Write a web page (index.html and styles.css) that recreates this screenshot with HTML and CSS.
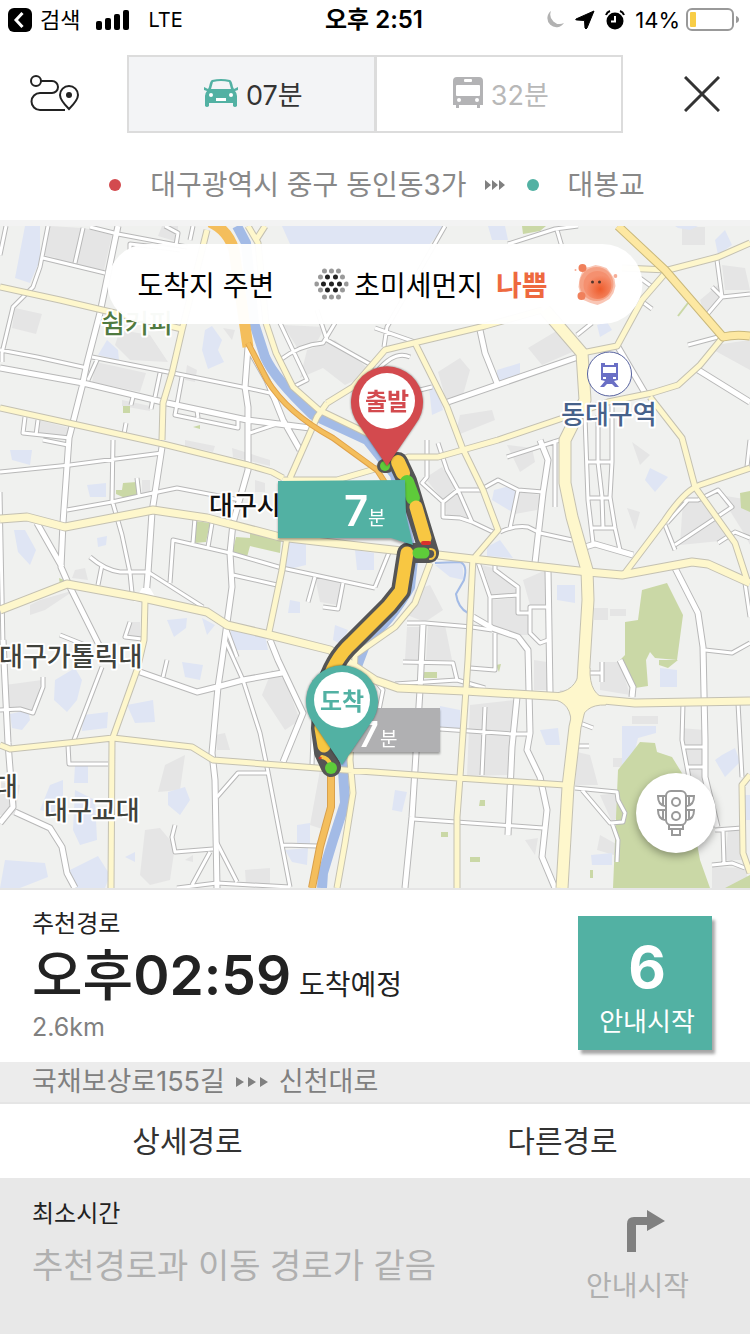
FILE: index.html
```html
<!DOCTYPE html>
<html lang="ko">

<head>
    <meta charset="UTF-8">
    <meta name="viewport" content="width=device-width, initial-scale=1.0">
    <title>길찾기</title>
    <link rel="stylesheet" href="styles.css">
</head>

<body>
    <div class="status-bar">
        <div class="status-left">
            <svg width="24" height="24" viewBox="0 0 24 24">
                <rect width="24" height="24" rx="6" />
                <path d="M14.500 5 L8 12 L14.500 19" fill="none" stroke="#fff" stroke-width="3" />
            </svg>
            <span>검색</span>
            <svg class="signal" width="34" height="20" viewBox="0 0 34 20">
                <rect x="0" y="11" width="6" height="9" rx="2" />
                <rect x="9" y="8" width="6" height="12" rx="2" />
                <rect x="18" y="4" width="6" height="16" rx="2" />
                <rect x="27" y="0" width="6" height="20" rx="2" />
            </svg>
            <span class="carrier">LTE</span>
        </div>
        <div class="status-time">오후 2:51</div>
        <div class="status-right">
            <svg width="20" height="20" viewBox="0 0 20 20">
                <path d="M6 1 A9 9 0 1 0 19 13 A9.500 9.500 0 0 1 6 1z" fill="#b2b2b2" />
            </svg>
            <svg width="20" height="20" viewBox="0 0 20 20">
                <path d="M19 1 L1 9 Q0 10 2 10 L9.500 10.500 L10 18 Q11 20 12 18z" stroke="#000" />
            </svg>
            <svg width="20" height="20" viewBox="0 0 20 20">
                <circle cx="10" cy="11" r="8.500" />
                <path d="M10 6 V11.500 H6" fill="none" stroke="#fff" stroke-width="2" />
                <path d="M1 5 Q2 2 5 1 M15 1 Q18 2 19 5" fill="none" stroke="#000" stroke-width="2" />
            </svg>
            <span>14%</span>
            <svg width="54" height="24" viewBox="0 0 54 24">
                <rect x="1" y="1" width="46" height="21" rx="5" fill="none" stroke="#999" stroke-width="2" />
                <rect x="4" y="4" width="6" height="15" rx="1" fill="#f8cd46" />
                <path d="M50 8 Q53 9 53 11.500 Q53 14 50 15z" fill="#999" />
            </svg>
        </div>
    </div>

    <header class="header">
        <button class="icon-btn" aria-label="경로">
            <svg width="50" height="38" viewBox="0 0 50 38" fill="none" stroke="#222" stroke-width="2">
                <circle cx="6" cy="6" r="5" />
                <path d="M11 6 H22 A6 6 0 0 1 22 18 H10 A8 8 0 0 0 10 35 H35" />
                <path d="M39 34 Q30 25 30 20 A9 9 0 0 1 48 20 Q48 25 39 34z" />
                <circle cx="39" cy="20" r="3" fill="#222" stroke="none" />
            </svg>
        </button>
        <div class="tabs">
            <button class="tab active">
                <svg width="34" height="28" viewBox="0 0 34 28">
                    <path d="M8 1 Q17 -1 26 1 Q28 2 29 8 L30 10 L34 8 V11 L31 12 Q33 14 33 17 V27 Q31 29 29 27 V24 H5 V27 Q3 29 1 27 V17 Q1 14 3 12 L0 11 V8 L4 10 L5 8 Q6 2 8 1z" fill="#52b1a3" />
                    <path d="M9 3 Q17 1 25 3 L27 10 H7z" fill="#f3f4f6" />
                    <circle cx="7" cy="16" r="2" fill="#fff" />
                    <circle cx="27" cy="16" r="2" fill="#fff" />
                    <rect x="12" y="19" width="10" height="3" fill="#fff" />
                </svg>
                07분
            </button>
            <button class="tab">
                <svg width="30" height="32" viewBox="0 0 30 32">
                    <path d="M4 0 H26 Q30 0 30 4 V28 H27 V31 H24 V28 H6 V31 H3 V28 H0 V4 Q0 0 4 0z" fill="#b3b3b5" />
                    <rect x="11" y="2" width="8" height="3" rx="1" fill="#fff" />
                    <rect x="3" y="8" width="24" height="11" rx="1" fill="#fff" />
                    <circle cx="6" cy="23" r="2" fill="#fff" />
                    <circle cx="24" cy="23" r="2" fill="#fff" />
                </svg>
                32분
            </button>
        </div>
        <button class="icon-btn" aria-label="닫기">
            <svg width="36" height="36" viewBox="0 0 36 36">
                <path d="M1 1 L35 35 M35 1 L1 35" stroke="#333" stroke-width="3" />
            </svg>
        </button>
    </header>

    <div class="route-title">
        <i class="dot start"></i>
        <span>대구광역시 중구 동인동3가</span>
        <svg class="arrows" width="20" height="10" viewBox="0 0 20 10">
            <path d="M0 0 L6 5 L0 10z M7 0 L13 5 L7 10z M14 0 L20 5 L14 10z" />
        </svg>
        <i class="dot goal"></i>
        <span>대봉교</span>
    </div>

    <main class="map">
        <svg class="map-canvas" viewBox="0 226 750 662">
            <defs>
                <path id="lanes" d="M118 230 L115 240 M90 227 L118 234 L187 247 M43 258 L105 273 M83 228 L75 263 M48 226 L40 267 L33 287 L13 307 L2 353 V362 M0 350 L37 357 L87 368 M92 357 L173 373 L247 388 L270 393 L277 403 M97 360 L88 380 M160 373 L155 397 M182 377 L175 415 L238 428 V420 M197 410 L198 418 M133 397 L131 405 M153 399 L151 409 M25 417 L23 433 L70 438 M38 420 L36 435 M126 423 L124 434 M250 433 L280 423 M280 323 L307 380 L293 387 M280 360 Q300 345 323 343 L335 323 M317 310 L327 340 L375 367 M130 250 V244 Q150 246 180 250 M193 226 L190 240 M165 226 L178 233 L176 245 M6 226 L0 255
                    M375 328 L415 342 M445 226 L387 327 L384 347 M508 244 L555 229 L578 226 M557 230 L562 247 M410 357 Q395 350 378 370 M577 335 L592 323 M717 260 L722 297 L705 317 M722 297 L750 294 M712 287 L722 297 M688 345 L718 337 M420 390 L432 387 M640 278 L651 286 M640 300 L652 309 M585 417 L588 500 L593 543 M598 415 V462 L602 497 L603 528 M612 405 V462 L610 497 L615 528 L620 550 M587 462 H611 M588 498 H611 M592 528 H615 M555 440 V507 M507 457 L560 440 M427 440 V477 L422 483 L443 502 L458 490 H480 L498 480 L518 490 L543 492 M438 443 L447 470 L458 490 L472 522 M443 502 V517 L460 518 L472 522 L493 532 M500 532 Q515 525 528 527 L540 533 L572 540 M518 490 L510 528 M478 562 L490 597 V627 M495 563 V570 L518 587 V613 H530 V607 H548 M530 613 V633 L540 643 L548 640 M490 597 L518 595 M407 623 H425 L472 627 L492 630 M495 633 V665 M675 550 L665 525 M675 545 L732 507 L718 490 L698 500 H682 M688 500 L667 523 M747 467 L750 440 M718 543 L735 532 L750 538 M705 650 L732 653 L750 643 M745 583 L750 617
                    M403 662 L453 663 L457 680 L485 688 M395 684 L457 680 M470 668 L495 670 V660 M602 662 V682 M590 673 H602 M375 680 L383 690 L378 715 M440 729 L512 734 H530 M485 707 L482 775 M413 819 L543 828 M580 723 L593 728 M578 746 H589 M575 788 L617 792 L618 800 L625 813 L623 822 L610 823 L582 790 M612 823 L618 840 L617 862 M683 703 L682 740 L690 783 M683 747 H705 M687 767 H704 M738 703 L742 777 M715 830 L742 828 M723 830 L724 863 M712 865 L732 863 L745 868
                    M0 710 L20 709 L33 713 L43 687 V677 M102 667 L74 740 M68 745 L69 764 H108 M167 660 L163 677 M225 640 L243 680 L260 733 L267 767 L290 887 M267 773 H238 L217 797 M175 825 L172 837 L175 852 L213 849 M217 843 L237 882 M210 852 L192 885 M177 888 L217 883 L290 887 M283 845 L317 846 M0 472 L70 465 L162 453 M113 440 L112 500 L122 535 L130 573 L132 593 M67 510 L112 502 L153 493 L177 488 L240 500 M137 478 L139 495 M0 492 L3 647 M90 557 Q105 570 120 572 H148 L203 607 M102 565 L98 585 M195 518 L193 543 M212 523 L208 547 M170 583 L173 540 L230 553 L282 568 L375 588 M233 575 L277 585 M315 577 L308 602 M343 583 L338 609 L323 607 M60 635 L85 645 M130 622 L125 637 L142 639 M227 630 L237 657 M43 440 L68 445 M375 587 L390 550 M315 680 L312 765" />
                <path id="streets" d="M118 226 L115 240 L100 313 L87 363 L82 387 L69 438 L63 523 L61 567 L68 583 L100 647 M0 368 L83 383 L167 403 L247 420 L310 428 M248 347 L245 387 L248 407 V470 L233 523 L230 553 L232 587 L227 623 L222 660 L218 687 L212 753 L215 780 L217 888 M250 350 L267 380 L283 420 L300 450 M162 447 L155 493 L152 512 L148 573 L146 597 M37 523 L62 567 M3 640 L8 743 L13 807 L0 823 M15 812 L50 828 L62 847 L67 873 L75 888 M140 672 L197 692 L217 687 L243 680 L282 673 M270 640 L278 660 L303 713 L283 762 M480 330 L485 353 L497 383 M445 403 L578 357 M618 347 L645 393 M695 368 L750 402 M540 440 L548 460 L543 493 L535 563 M585 547 L595 544 L633 555 M548 570 L550 692 M423 625 L420 690 L412 817 L405 888 M473 617 L492 628 L518 637 L528 650 L530 733 L527 750 L540 777 L547 810 L542 857 L555 888 M675 568 L698 613 L703 647 L705 740 V777 L717 827 M620 660 L633 687 L632 697 M517 697 L512 747 L508 835" />
                <path id="roads" d="M0 287 L60 300 L115 313 L182 329 M0 408 L73 424 L163 444 L248 465 L272 472 L283 478 M327 403 L317 417 L290 478 M283 480 L337 480 L375 469 L408 457 H438 L498 440 L563 418 L608 402 L652 393 L678 385 L700 365 L723 337 M207 230 L182 330 L172 373 L163 403 L162 440 M248 226 L258 243 L266 323 L276 353 L293 387 L319 410 L375 437 M265 226 L256 240 M327 403 L353 387 L385 350 L418 342 L485 326 L542 310 M582 353 L617 346 L642 300 L668 270 M622 268 L668 270 L718 257 L750 243 M415 343 L447 407 L462 447 L483 490 L498 530 L475 557 M650 397 L682 438 L695 487 L735 543 L747 580 M750 468 L700 485 Q685 490 665 520 L625 573 M287 537 L282 570 L269 632 M473 557 L468 660 L460 777 L457 817 V888 M430 563 L415 603 L395 627 L355 655 L350 760 L353 793 L345 843 L337 888 M750 775 L742 785 L743 853 L750 873 M0 745 L10 749 L77 742 L113 738 L192 747 L213 760 L317 768 L458 778 L565 785 M145 600 L144 640 L137 670 L112 740 L111 888" />
                <path id="avenues" d="M0 519 L27 517 L65 527 L153 510 L207 518 L280 537 L375 548 L438 555 L588 572 L622 575 L692 562 L708 564 L750 583 M0 610 L67 584 L143 598 L207 612 L227 625 L270 635 L330 650 L375 680 L398 688 L465 691 L582 698 L635 703 L750 701" />
                <path id="boulevard" d="M545 310 L582 353 L585 400 L565 440 V483 L572 517 L587 570 L588 600 L582 697 L575 727 L568 787 L562 888" />
                <path id="river" d="M237 226 L246 243 L254 323 L265 357 Q274 378 313 415 L367 440 L395 475 L413 560 L410 587 Q390 622 367 640 L348 690 L343 770 L345 803 L333 840 L323 873 L322 888" />
            </defs>

            <rect x="0" y="226" width="750" height="662" fill="#f0f1ef" />

            <!-- blocks -->
            <path class="block" d="M50 226 L82 228 L74 262 L43 255z M84 228 L112 235 L104 270 L52 262z M162 226 H178 V242 L158 236z M15 308 L42 314 L36 334 L12 328z M96 362 L146 373 L140 392 L92 382z M120 330 L150 335 L168 362 L130 360 L115 345z M283 325 L325 327 L318 340 L300 352z M307 350 L335 340 L372 372 L345 385 L323 368 L300 378z M38 420 L70 428 V438 L38 435z M528 348 L558 330 L577 350 L542 365z M438 372 L460 358 L470 370 L463 395 L446 400z M460 415 L492 410 L495 420 L455 436z M705 315 L721 298 L718 285 L700 300z M715 345 L750 340 V370 L710 348z M722 265 L745 268 L750 290 H725z M425 478 L442 467 L455 488 L443 500z M445 502 L458 492 L470 518 H447z M683 500 L700 500 L730 540 L680 545z M720 495 L745 535 L750 545 V500z M507 445 L532 448 L535 462 L520 472z M518 492 L540 495 L537 510 L515 514z M482 565 L500 570 L517 588 L516 595 H492z M493 600 L516 598 L520 613 L530 616 V635 H493z M523 580 L546 570 V605 H530z M415 590 L430 585 L443 610 L425 622 L407 615z M407 627 H422 V660 H405z M428 625 H445 L452 660 H426z M128 622 H140 V637 H127z M315 577 L342 583 L337 605 L320 602z M5 685 L42 680 L33 710 L6 708z M470 705 L515 700 L508 775 L467 776z M165 765 L185 755 L180 790 L158 792z M145 830 L160 828 L175 846 L170 880 L150 885 L140 875z M272 670 L285 680 L300 720 L285 730 L262 695z M245 870 L270 868 V885 H246z M0 782 L20 785 L15 815 H0z M600 795 L617 793 L624 812 L612 822z M728 830 L742 830 V860 H725z M712 867 L745 868 L750 888 H712z M680 728 L705 730 V785 L690 775z M600 835 L618 845 L614 855 L597 850z M577 752 L590 755 L598 785 L575 785z M534 660 L547 662 V690 H534z M320 770 H332 L325 830 L310 825z M600 662 L620 662 L630 695 L600 690z M75 590 L40 600 L30 605 V615 L45 610z M75 570 L85 568 L88 580 L72 578z" />
            <path class="block" d="M185 440 L215 446 L213 452 L185 446z M232 448 L270 460 V466 L233 457z M142 480 H150 V493 H142z M255 480 L265 483 V492 H255z M122 400 L150 406 V411 L122 406z M187 365 L197 370 L195 382 L185 380z M223 328 L235 330 L232 340z M682 227 H705 V245 H682z M632 442 L650 455 L640 465z M627 508 L640 512 L635 530z M594 608 H608 V620 H594z M610 609 H626 V616 H610z M560 690 H575 V700 H560z M632 716 H658 V724 H632z M613 758 H625 V767 H613z M525 840 L538 838 L535 855z M215 735 L225 733 L230 750 H217z M185 860 L193 855 V862z" />
            <path class="water-block" d="M25 226 H40 V260 L30 283 L15 278z M282 226 H445 L430 244 H290z M488 226 H505 L508 240 H492z M107 340 L118 350 L119 360 L98 355z M205 330 L212 326 L222 340 L218 350 L224 362 L208 369 L202 350z M10 450 L32 450 L30 465 L12 460z M87 485 L106 483 V497 H90z M14 530 L25 530 L36 550 L30 565 L18 552z M97 538 L107 536 L106 545 L98 547z M287 540 L306 543 V565 L285 570z M290 600 L300 602 V613 H288z M167 620 L187 618 L186 628 L174 637z M202 618 L215 625 L207 635z M230 625 L265 635 L268 650 H233z M335 625 L348 630 L342 645 L333 640z M355 550 L374 553 V570 H357z M497 370 L520 363 V375 L497 382z M597 325 L607 322 L612 330 L600 337z M715 240 L725 230 L732 245 L718 255z M675 226 H698 L690 230 L678 228z M645 480 L650 468 L668 477 L655 492z M494 490 L510 486 L517 490 L512 512 L492 500z M487 547 L500 540 L513 558 L487 556z M557 585 H575 V603 L557 600z M435 565 L462 562 L464 580 L450 577z M429 387 L437 385 L443 410 L432 415z M55 680 L75 668 L82 680 L77 700 L67 712 L54 700z M10 714 L28 710 L30 720 L22 730 L12 728z M83 715 L108 712 L107 728 L82 731z M127 705 L153 700 L155 722 L135 723z M182 662 L203 665 L200 680 L185 677z M75 765 H88 V783 H74z M50 785 L63 780 V815 L40 810z M75 790 L95 800 L97 840 L80 845 L73 830z M168 792 L185 787 L190 800 L180 815 L168 805z M125 857 L135 852 V862z M5 860 L45 863 L48 877 L20 888 H0z M70 870 L98 856 L110 875 L105 888 H72z M440 706 L460 710 V728 H440z M540 730 L558 728 L560 745 H546z M660 668 L677 670 V687 H660z M395 790 L407 792 L402 812 L392 810z M622 726 H656 V733 L638 738 L632 763 L622 765z M722 755 L735 748 L740 762 L725 777 L715 760z M591 855 L612 853 V865 H592z M745 795 H750 V820 H745z M285 850 L308 848 L307 865 L292 862z M297 825 L310 823 V845 H297z" />
            <path class="park" d="M522 226 H546 L540 231 L523 234z M123 406 H130 V413 H123z M123 483 L137 482 L138 494 L125 498 L116 494 V490 L122 490z M195 521 L210 523 L206 542 L194 543z M236 537 L250 538 V532 L281 540 L280 553 L250 546 L247 557 L232 553z M642 590 L667 583 L683 615 L677 660 L655 658 L650 652 L646 660 L648 686 L635 688 L620 660 L625 655 V622 L638 620z M659 660 H678 L668 668 L659 665z M740 493 L750 491 V512 L741 508z M424 672 H437 V678 H424z M496 665 L501 664 L499 672z M618 770 L630 755 L640 742 L655 743 L657 752 L672 757 L685 778 L700 860 L710 888 H613z M725 888 L750 875 V888z M480 800 H485 V806 H479z M441 832 H448 V837 H441z M470 857 H480 V862 H470z M590 870 H593 V878 H590z M59 578 L64 580 L60 585z M193 427 L200 425 L200 429z" />
            <path d="M688 303 L678 316" stroke="#cad8a6" stroke-width="2" />

            <use href="#lanes" class="lane-edge" />
            <use href="#streets" class="street-edge" />
            <use href="#lanes" class="lane" />
            <use href="#streets" class="street" />
            <path d="M142 588 H150 L158 602 H134z" fill="#fff" />
            <use href="#river" class="river" />
            <path d="M435 563 L460 562 Q468 565 464 580 L456 594 Q458 608 468 613" fill="none" stroke="#a3bbe6" stroke-width="2" />
            <use href="#roads" class="road-edge" />
            <use href="#avenues" class="avenue-edge" />
            <use href="#boulevard" class="boulevard-edge" />
            <!-- interchange fillets -->
            <path class="interchange" d="M552 693 Q577 693 580 668 L590 668 Q589 696 608 699 L606 705 Q582 704 580 726 L571 728 Q573 701 550 699z" />
            <use href="#roads" class="road" />
            <use href="#avenues" class="avenue" />
            <use href="#boulevard" class="boulevard" />
            <path d="M618 226 L665 270 L723 337 Q735 334 750 336" class="main-edge" />
            <path d="M618 226 L665 270 L723 337 Q735 334 750 336" class="main" />

            <path d="M210 222 Q228 230 234 250 L248 347" fill="none" stroke="#f4be5c" stroke-width="11" />
            <path d="M248 343 L267 380 Q287 413 333 438 L377 470 L386 484" fill="none" stroke="#e0a24a" stroke-width="6" />
            <path d="M248 343 L267 380 Q287 413 333 438 L377 470 L386 484" fill="none" stroke="#f4be5c" stroke-width="4" />
            <path d="M331 772 V807 L320 847 L312 888" fill="none" stroke="#d9a04c" stroke-width="8" />
            <path d="M331 772 V807 L320 847 L312 888" fill="none" stroke="#f4be5c" stroke-width="6" />

            <!-- place names -->
            <g class="place">
                <text x="101" y="333" class="green">쉼커피</text>
                <text x="209" y="515" class="black">대구시</text>
                <text x="561" y="424" class="blue">동대구역</text>
                <text x="-1" y="666">대구가톨릭대</text>
                <text x="-6" y="796">대</text>
                <text x="44" y="820">대구교대</text>
            </g>
            <g>
                <circle cx="609.500" cy="374" r="22" fill="#fff" stroke="#57629f" />
                <path d="M601 363 H605 V365 H614 V363 H618 V380 L614 381 L619 387 H615 L612 384 H607 L604 387 H600 L605 381 L601 380z" fill="#6a6fc5" />
                <rect x="603" y="367" width="13" height="6" fill="#fff" />
                <rect x="603" y="377" width="3" height="2" fill="#fff" />
                <rect x="613" y="377" width="3" height="2" fill="#fff" />
            </g>

            <!-- alternative callout -->
            <g class="callout">
                <path d="M330 708 H440 V752 H330z" fill="#b0b0b2" />
                <text x="358" y="747" class="callout-num small">7</text>
                <text x="380" y="746" class="callout-unit">분</text>
            </g>

            <!-- route -->
            <g fill="none" stroke-linecap="round" stroke-linejoin="round">
                <path d="M398 462 L407 481 L429 553 H407 L401 591 L389 606 L352 643 Q333 660 325 690 L321 728 L324 752 L331 767" stroke="#555" stroke-width="20" />
                <path d="M384 466 H387" stroke="#555" stroke-width="14" />
                <path d="M398 462 L403 473" stroke="#f8c742" stroke-width="14" />
                <path d="M407 482 L413 498" stroke="#5ecb3a" stroke-width="14" />
                <path d="M416 507 L425 538" stroke="#f8c742" stroke-width="13" />
                <path d="M407 553 L401 591 L389 606 L352 643 Q333 660 325 690 L321 728 L324 746" stroke="#f8c742" stroke-width="13" />
                <path d="M423 543 H429" stroke="#d9302c" stroke-width="4" />
                <path d="M418 553 H424" stroke="#5ecb3a" stroke-width="11" />
                <path d="M430 549 Q436 549 435 555 Q434 559 430 559" stroke="#f8c742" stroke-width="2" />
                <path d="M322 757 Q328 758 331 765" stroke="#f8c742" stroke-width="4" />
                <circle cx="320" cy="758" r="1" stroke="#d9302c" />
            </g>
            <circle cx="331" cy="768" r="6" fill="#5ecb3a" />
            <circle cx="385" cy="466" r="5" fill="#5ecb3a" />

            <!-- current callout -->
            <g class="callout">
                <path d="M278 481 L405 480 L406 515 L413 545 L391 538 H278z" fill="#52b1a3" />
                <text x="344" y="526" class="callout-num">7</text>
                <text x="368" y="525" class="callout-unit">분</text>
            </g>

            <!-- pins -->
            <g class="pin">
                <path d="M387 466 L359 425 A36 36 0 1 1 415 425z" fill="#d34a4e" />
                <circle cx="387" cy="401" r="28" fill="#fff" />
                <text x="387" y="410" fill="#d34a4e">출발</text>
            </g>
            <g class="pin">
                <path d="M342 765 L314 724 A36 36 0 1 1 370 724z" fill="#52b1a3" />
                <circle cx="342" cy="700" r="28" fill="#fff" />
                <text x="342" y="710" fill="#52b1a3">도착</text>
            </g>
        </svg>

        <div class="air">
            <span>도착지 주변</span>
            <span class="air-type">
                <svg width="34" height="32" viewBox="0 0 34 32">
                    <path class="dots light" d="M10 3h0M17 3h0M24 3h0M6 9h0M28 9h0M2 16h0M32 16h0M6 22h0M28 22h0M10 29h0M17 29h0M24 29h0" />
                    <path class="dots dark" d="M13 9h0M21 9h0M9 16h0M17 16h0M25 16h0M13 22h0M21 22h0" />
                </svg>
                초미세먼지
            </span>
            <strong>나쁨</strong>
            <svg class="dust" width="44" height="44" viewBox="0 0 44 44">
                <defs>
                    <radialGradient id="dust" cx="60%" cy="65%">
                        <stop offset="0" stop-color="#ee5c2c" />
                        <stop offset="1" stop-color="#f5906f" />
                    </radialGradient>
                </defs>
                <path d="M10 6 L16 5 L22 3 L27 4 L33 6 L37 11 L41 17 L42 24 L40 31 L36 37 L29 41 L24 43 L17 41 L10 38 L7 32 L5 25 L6 17z" fill="#f8b8a2" opacity=".8" />
                <circle cx="23" cy="22" r="17" fill="#f4926f" opacity=".7" />
                <circle cx="24" cy="23" r="14" fill="url(#dust)" />
                <circle cx="9" cy="6" r="4" fill="#f0805b" />
                <circle cx="8" cy="34" r="4" fill="#f0805b" />
                <circle cx="2" cy="8" r="1" fill="#f6ad97" />
                <circle cx="42" cy="14" r="2" fill="#f6ad97" />
                <circle cx="19" cy="20" r="1.500" fill="#51352b" />
                <circle cx="26" cy="20" r="1.500" fill="#51352b" />
            </svg>
        </div>

        <button class="traffic-btn" aria-label="교통정보">
            <svg width="40" height="48" viewBox="0 0 40 48" fill="none" stroke="#999" stroke-width="2">
                <rect x="10" y="2" width="20" height="34" rx="5" />
                <circle cx="20" cy="13" r="4" />
                <circle cx="20" cy="27" r="4" />
                <path d="M10 7 H2 Q2 16 9 17 M10 21 H2 Q2 30 9 31 M30 7 H38 Q38 16 31 17 M30 21 H38 Q38 30 31 31 M7 7 V17 M33 7 V17 M7 21 V31 M33 21 V31 M13 36 V40 H27 V36 M16 40 V46 H24 V40" />
            </svg>
        </button>
    </main>

    <section class="summary">
        <div class="summary-info">
            <h2>추천경로</h2>
            <p class="arrival"><strong><span>오후</span>02:59</strong> 도착예정</p>
            <p class="distance">2.6km</p>
        </div>
        <button class="start-btn"><strong>6</strong>안내시작</button>
    </section>

    <div class="via">
        국채보상로155길
        <svg class="arrows" width="32" height="12" viewBox="0 0 32 12">
            <path d="M0 1 L8 6 L0 11z M12 1 L20 6 L12 11z M24 1 L32 6 L24 11z" />
        </svg>
        신천대로
    </div>

    <nav class="actions">
        <button>상세경로</button>
        <button>다른경로</button>
    </nav>

    <section class="other">
        <div>
            <h2>최소시간</h2>
            <p>추천경로과 이동 경로가 같음</p>
        </div>
        <button class="other-btn">
            <svg width="56" height="42" viewBox="-18 0 56 42">
                <path d="M0 42 V14 Q0 7 7 7 H20 V0 L38 11 L20 21 V15 H9 V42z" fill="#808080" />
            </svg>
            안내시작
        </button>
    </section>
</body>

</html>
```

FILE: styles.css
```css
* {
    box-sizing: border-box;
}

body {
    margin: 0;
    min-height: 100vh;
    display: flex;
    flex-direction: column;
    background: #fff;
    color: #222;
    font-family: Inter, "Noto Sans CJK KR", sans-serif;
}

h2,
p {
    margin: 0;
    font-weight: 400;
}

button {
    padding: 0;
    border: none;
    background: none;
    color: inherit;
    font: inherit;
    cursor: pointer;
}

svg {
    display: block;
    flex: none;
}

.status-bar {
    display: grid;
    grid-template-columns: 1fr auto 1fr;
    align-items: center;
    height: 40px;
    padding: 0 10px 0 8px;
    color: #000;
    font-size: 22px;
    line-height: 40px;
}

.status-left,
.status-right {
    display: flex;
    align-items: center;
    gap: 8px;
}

.status-right {
    justify-content: flex-end;
    gap: 10px;
}

.status-right span {
    margin-right: -4px;
}

.status-time {
    font-size: 24px;
    font-weight: 600;
}

.signal {
    margin: 0 10px 0 8px;
}

.carrier {
    font-size: 20px;
}

.header {
    display: flex;
    align-items: center;
    justify-content: space-between;
    margin-top: 15px;
    padding: 0 30px;
}

.tabs {
    display: flex;
    flex: 1;
    margin: 0 61px 0 47px;
}

.tab {
    flex: 1;
    display: flex;
    align-items: center;
    justify-content: center;
    gap: 8px;
    height: 78px;
    padding: 0 0 2px 4px;
    border: 2px solid #dcdcdc;
    color: #b8b8b8;
    font-size: 27px;
}

.tab.active {
    background: #f3f4f6;
    color: #333;
}

.tab + .tab {
    border-left-width: 1px;
}

.route-title {
    display: flex;
    align-items: center;
    justify-content: center;
    height: 93px;
    padding: 16px 0 0 4px;
    border-bottom: 6px solid #f3f3f3;
    color: #888;
    font-size: 28px;
    line-height: 40px;
}

.dot {
    width: 12px;
    height: 12px;
    margin-right: 29px;
    border-radius: 50%;
}

.dot.start {
    background: #d34a4e;
}

.dot.goal {
    background: #52b1a3;
}

.arrows {
    fill: #808080;
}

.route-title .arrows {
    margin: 0 22px 0 18px;
}

.map {
    position: relative;
    border-bottom: 2px solid #e5e5e5;
}

.map-canvas {
    width: 100%;
    height: auto;
}

.block {
    fill: #e5e5e5;
}

.water-block {
    fill: #dfe5f4;
}

.park {
    fill: #cad8a6;
}

.map-canvas use,
.main,
.main-edge {
    fill: none;
    stroke-linejoin: round;
}

.lane-edge {
    stroke: #b8b8b8;
    stroke-width: 5px;
}

.lane {
    stroke: #fff;
    stroke-width: 3px;
}

.street-edge {
    stroke: #b8b8b8;
    stroke-width: 7px;
}

.street {
    stroke: #fff;
    stroke-width: 5px;
}

.road-edge {
    stroke: #c4c1b2;
    stroke-width: 7px;
}

.road {
    stroke: #fef7cc;
    stroke-width: 5px;
}

.avenue-edge {
    stroke: #c4c1b2;
    stroke-width: 9px;
}

.avenue {
    stroke: #fef7cc;
    stroke-width: 7px;
}

.boulevard-edge {
    stroke: #c4c1b2;
    stroke-width: 13px;
}

.boulevard {
    stroke: #fef7cc;
    stroke-width: 11px;
}

.interchange {
    fill: #fef7cc;
    stroke: #c4c1b2;
}

.main-edge {
    stroke: #c9b87c;
    stroke-width: 9px;
}

.main {
    stroke: #fde8a2;
    stroke-width: 7px;
}

.river {
    stroke: #a3bbe6;
    stroke-width: 10px;
}

.place text {
    fill: #40423c;
    stroke: #fff;
    stroke-width: 4px;
    stroke-linejoin: round;
    paint-order: stroke;
    font-size: 26px;
    font-weight: 500;
}

.place .green {
    fill: #4f7a40;
}

.place .black {
    fill: #111;
}

.place .blue {
    fill: #46618a;
}

.callout {
    filter: drop-shadow(0 2px 1px rgba(0, 0, 0, 0.35));
}

.callout text {
    fill: #fff;
}

.callout-num {
    font-size: 42px;
    font-weight: 600;
}

.callout-num.small {
    font-size: 36px;
}

.callout-unit {
    font-size: 19px;
}

.pin {
    filter: drop-shadow(0 0 1px rgba(0, 0, 0, 0.5));
}

.pin text {
    font-size: 24px;
    font-weight: 700;
    text-anchor: middle;
}

/* 미세먼지 */
.air {
    position: absolute;
    top: 18px;
    left: 50%;
    transform: translateX(-50%);
    display: flex;
    align-items: center;
    height: 80px;
    padding: 0 25px 0 30px;
    border-radius: 40px;
    background: rgba(255, 255, 255, 0.96);
    color: #000;
    font-size: 28px;
    white-space: nowrap;
}

.air-type {
    display: flex;
    align-items: center;
    gap: 6px;
    margin: 0 13px 0 40px;
}

.air strong {
    color: #ee693f;
    font-weight: 700;
}

.dots {
    fill: none;
    stroke-width: 5px;
    stroke-linecap: round;
}

.dots.light {
    stroke: #999;
}

.dots.dark {
    stroke: #222;
}

.dust {
    margin-left: 26px;
}

.traffic-btn {
    position: absolute;
    right: 34px;
    bottom: 35px;
    display: flex;
    align-items: center;
    justify-content: center;
    width: 80px;
    height: 80px;
    border-radius: 50%;
    background: #fff;
    box-shadow: 0 3px 8px rgba(0, 0, 0, 0.35);
}

.summary {
    display: flex;
    align-items: flex-start;
    justify-content: space-between;
    height: 172px;
    padding: 16px 38px 0 32px;
}

.summary h2,
.other h2 {
    font-size: 24px;
    line-height: 36px;
}

.arrival {
    display: flex;
    align-items: baseline;
    gap: 8px;
    height: 66px;
    font-size: 28px;
    line-height: 66px;
}

.arrival strong {
    font-size: 55px;
    font-weight: 600;
}

.arrival strong span {
    font-weight: 500;
}

.distance {
    color: #808080;
    font-size: 25px;
    line-height: 38px;
}

.start-btn {
    display: flex;
    flex-direction: column;
    align-items: center;
    justify-content: center;
    gap: 3px;
    width: 134px;
    height: 134px;
    margin-top: 10px;
    padding: 6px 0 0 4px;
    background: #52b1a3;
    box-shadow: 3px 4px 3px rgba(0, 0, 0, 0.35);
    color: #fff;
    font-size: 26px;
    line-height: 36px;
}

.start-btn strong {
    font-size: 58px;
    line-height: 68px;
}

.via {
    display: flex;
    align-items: center;
    gap: 11px;
    height: 42px;
    padding: 0 32px;
    border-bottom: 2px solid #e5e5e5;
    background: #ececec;
    color: #808080;
    font-size: 27px;
    line-height: 40px;
}

.actions {
    display: flex;
    height: 74px;
}

.actions button {
    flex: 1;
    padding-bottom: 4px;
    color: #333;
    font-size: 30px;
}

.other {
    flex: 1;
    display: flex;
    align-items: flex-start;
    justify-content: space-between;
    padding: 18px 61px 20px 32px;
    background: #e8e8e8;
}

.other p {
    margin-top: 8px;
    color: #b0b0b0;
    font-size: 34px;
    line-height: 52px;
}

.other-btn {
    display: flex;
    flex-direction: column;
    align-items: center;
    gap: 14px;
    margin-top: 14px;
    color: #b0b0b0;
    font-size: 28px;
    line-height: 40px;
}
```
